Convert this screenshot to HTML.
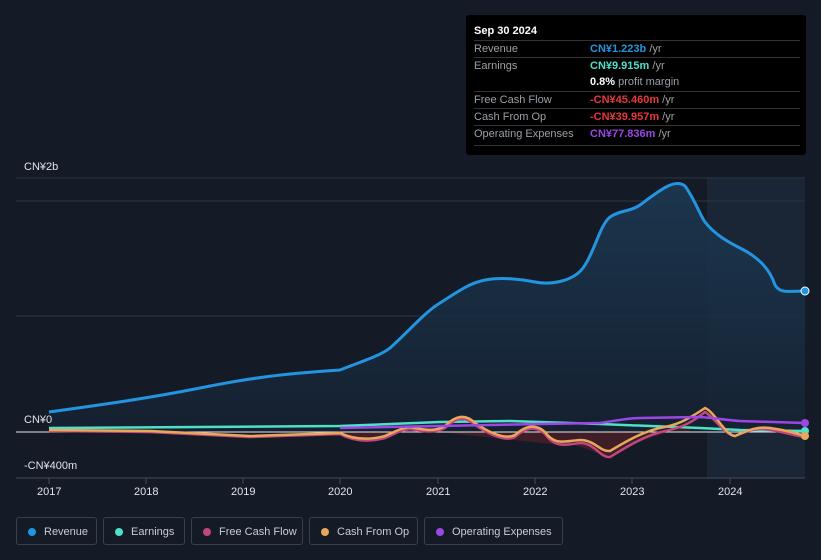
<!DOCTYPE html>
<html><head><meta charset="utf-8"><style>
body{margin:0;width:821px;height:560px;background:#151b26;font-family:"Liberation Sans","Noto Sans CJK SC",sans-serif;overflow:hidden;position:relative}
.tt{position:absolute;left:466px;top:15px;width:340px;height:140px;background:#000;border-radius:3px}
.tt .h{position:absolute;left:8px;top:10px;color:#fff;font-size:11px;font-weight:bold}
.row{position:absolute;left:8px;width:326px;height:17px;border-top:1px solid #333;font-size:11px;color:#9aa0a6}
.row span{position:absolute;top:2px}
.row .v{left:116px}
.lg{position:absolute;top:517px;height:28px;border:1px solid #3a404b;border-radius:3px;color:#c8ccd2;font-size:11px;line-height:28px;box-sizing:border-box;padding-left:27px}
.lg i{position:absolute;left:11px;top:10px;width:8px;height:8px;border-radius:50%}
.ax{position:absolute;color:#e0e3e8;font-size:11px}
</style></head><body>
<svg width="821" height="560" style="position:absolute;left:0;top:0">
<defs><linearGradient id="g" x1="0" y1="0" x2="0" y2="1"><stop offset="0" stop-color="#1c3a55"/><stop offset="1" stop-color="#152131"/></linearGradient></defs>
<rect x="707" y="178" width="98" height="300" fill="#1a2636"/>
<line x1="16" y1="178" x2="805" y2="178" stroke="#2c3440"/>
<line x1="16" y1="201" x2="805" y2="201" stroke="#2c3440"/>
<line x1="16" y1="316" x2="805" y2="316" stroke="#2c3440"/>
<path d="M49,412 C100,405 150,398 200,388 S280,374 340,370 C360,362 380,356 390,348 C410,330 425,312 440,303 C460,290 470,283 485,280 S520,279 535,282 S575,282 585,265 C595,250 600,225 610,217 C620,210 630,212 640,205 C660,190 675,178 685,186 C695,200 700,215 705,222 C715,235 730,243 740,248 C760,258 770,270 775,285 C780,294 790,291 805,291 L805,432 L49,432Z" fill="url(#g)" opacity="0.85"/>
<path d="M340,432 C355,440 370,440 385,436 S420,430 440,432 L560,445 C580,441 595,456 610,455 C630,445 660,432 690,428 L690,432Z" fill="#4a1f28" opacity="0.8"/>
<line x1="16" y1="432" x2="805" y2="432" stroke="#e8e8e8" stroke-width="1"/>
<line x1="16" y1="478" x2="805" y2="478" stroke="#444b56"/>
<path d="M49,412 C100,405 150,398 200,388 S280,374 340,370 C360,362 380,356 390,348 C410,330 425,312 440,303 C460,290 470,283 485,280 S520,279 535,282 S575,282 585,265 C595,250 600,225 610,217 C620,210 630,212 640,205 C660,190 675,178 685,186 C695,200 700,215 705,222 C715,235 730,243 740,248 C760,258 770,270 775,285 C780,294 790,291 805,291" fill="none" stroke="#2394df" stroke-width="3"/>
<path d="M49,428 L200,427 L340,426 L440,422 L510,421 L600,424 L700,428 L740,430 L805,431" fill="none" stroke="#4fe0c8" stroke-width="2.5"/>
<path d="M49,431 L150,432 L250,437 L340,434 C355,442 370,442 385,438 C395,434 400,430 410,429 C425,432 435,433 445,428 C455,418 465,415 475,425 C490,435 505,442 515,437 C525,428 535,425 545,434 C555,448 565,445 580,443 C595,443 600,458 610,457 C625,448 645,435 665,431 C680,428 690,424 705,412 C715,418 725,435 735,436 C745,432 755,427 770,430 C785,432 795,436 805,437" fill="none" stroke="#c2467e" stroke-width="2.5"/>
<path d="M49,430 L150,431 L250,436 L340,433 C355,440 370,440 385,436 C395,432 400,428 410,427 C425,430 435,432 445,426 C455,416 465,413 475,423 C490,433 505,440 515,435 C525,426 535,423 545,432 C555,446 565,441 580,440 C595,440 600,452 610,451 C625,442 645,430 665,427 C680,424 690,418 705,408 C715,412 725,435 735,436 C745,432 755,426 770,428 C785,430 795,433 805,436" fill="none" stroke="#e8a85c" stroke-width="2.5"/>
<path d="M340,428 L440,426 L540,424 L600,423 C620,420 630,418 640,418 L700,417 C715,418 725,420 740,421 L805,423" fill="none" stroke="#9b47e6" stroke-width="2.5"/>
<circle cx="805" cy="291" r="4" fill="#2394df" stroke="#fff" stroke-width="1"/>
<circle cx="805" cy="423" r="4" fill="#9b47e6"/>
<circle cx="805" cy="431" r="4" fill="#4fe0c8"/>
<circle cx="805" cy="436" r="4" fill="#e8a85c"/>
<g stroke="#444b56"><line x1="49" y1="478" x2="49" y2="484"/><line x1="146" y1="478" x2="146" y2="484"/><line x1="243" y1="478" x2="243" y2="484"/><line x1="340" y1="478" x2="340" y2="484"/><line x1="438" y1="478" x2="438" y2="484"/><line x1="535" y1="478" x2="535" y2="484"/><line x1="632" y1="478" x2="632" y2="484"/><line x1="730" y1="478" x2="730" y2="484"/></g>
</svg>
<div class="ax" style="left:24px;top:161px">CN¥2b</div>
<div class="ax" style="left:24px;top:414px">CN¥0</div>
<div class="ax" style="left:24px;top:460px">-CN¥400m</div>
<div class="ax" style="left:37px;top:486px">2017</div>
<div class="ax" style="left:134px;top:486px">2018</div>
<div class="ax" style="left:231px;top:486px">2019</div>
<div class="ax" style="left:328px;top:486px">2020</div>
<div class="ax" style="left:426px;top:486px">2021</div>
<div class="ax" style="left:523px;top:486px">2022</div>
<div class="ax" style="left:620px;top:486px">2023</div>
<div class="ax" style="left:718px;top:486px">2024</div>
<div class="tt">
<div class="h">Sep 30 2024</div>
<div class="row" style="top:25px"><span>Revenue</span><span class="v"><b style="color:#2394df">CN¥1.223b</b> /yr</span></div>
<div class="row" style="top:42px"><span>Earnings</span><span class="v"><b style="color:#4fe0c8">CN¥9.915m</b> /yr</span></div>
<div class="row" style="top:59px;border-top:none"><span class="v"><b style="color:#fff">0.8%</b> profit margin</span></div>
<div class="row" style="top:76px"><span>Free Cash Flow</span><span class="v"><b style="color:#e5383b">-CN¥45.460m</b> /yr</span></div>
<div class="row" style="top:93px"><span>Cash From Op</span><span class="v"><b style="color:#e5383b">-CN¥39.957m</b> /yr</span></div>
<div class="row" style="top:110px"><span>Operating Expenses</span><span class="v"><b style="color:#9b47e6">CN¥77.836m</b> /yr</span></div>
<div class="row" style="top:130px;height:0"></div>
</div>
<div class="lg" style="left:16px;width:81px"><i style="background:#2394df"></i>Revenue</div>
<div class="lg" style="left:103px;width:82px"><i style="background:#4fe0c8"></i>Earnings</div>
<div class="lg" style="left:191px;width:112px"><i style="background:#c2467e"></i>Free Cash Flow</div>
<div class="lg" style="left:309px;width:109px"><i style="background:#e8a85c"></i>Cash From Op</div>
<div class="lg" style="left:424px;width:139px"><i style="background:#9b47e6"></i>Operating Expenses</div>
</body></html>
